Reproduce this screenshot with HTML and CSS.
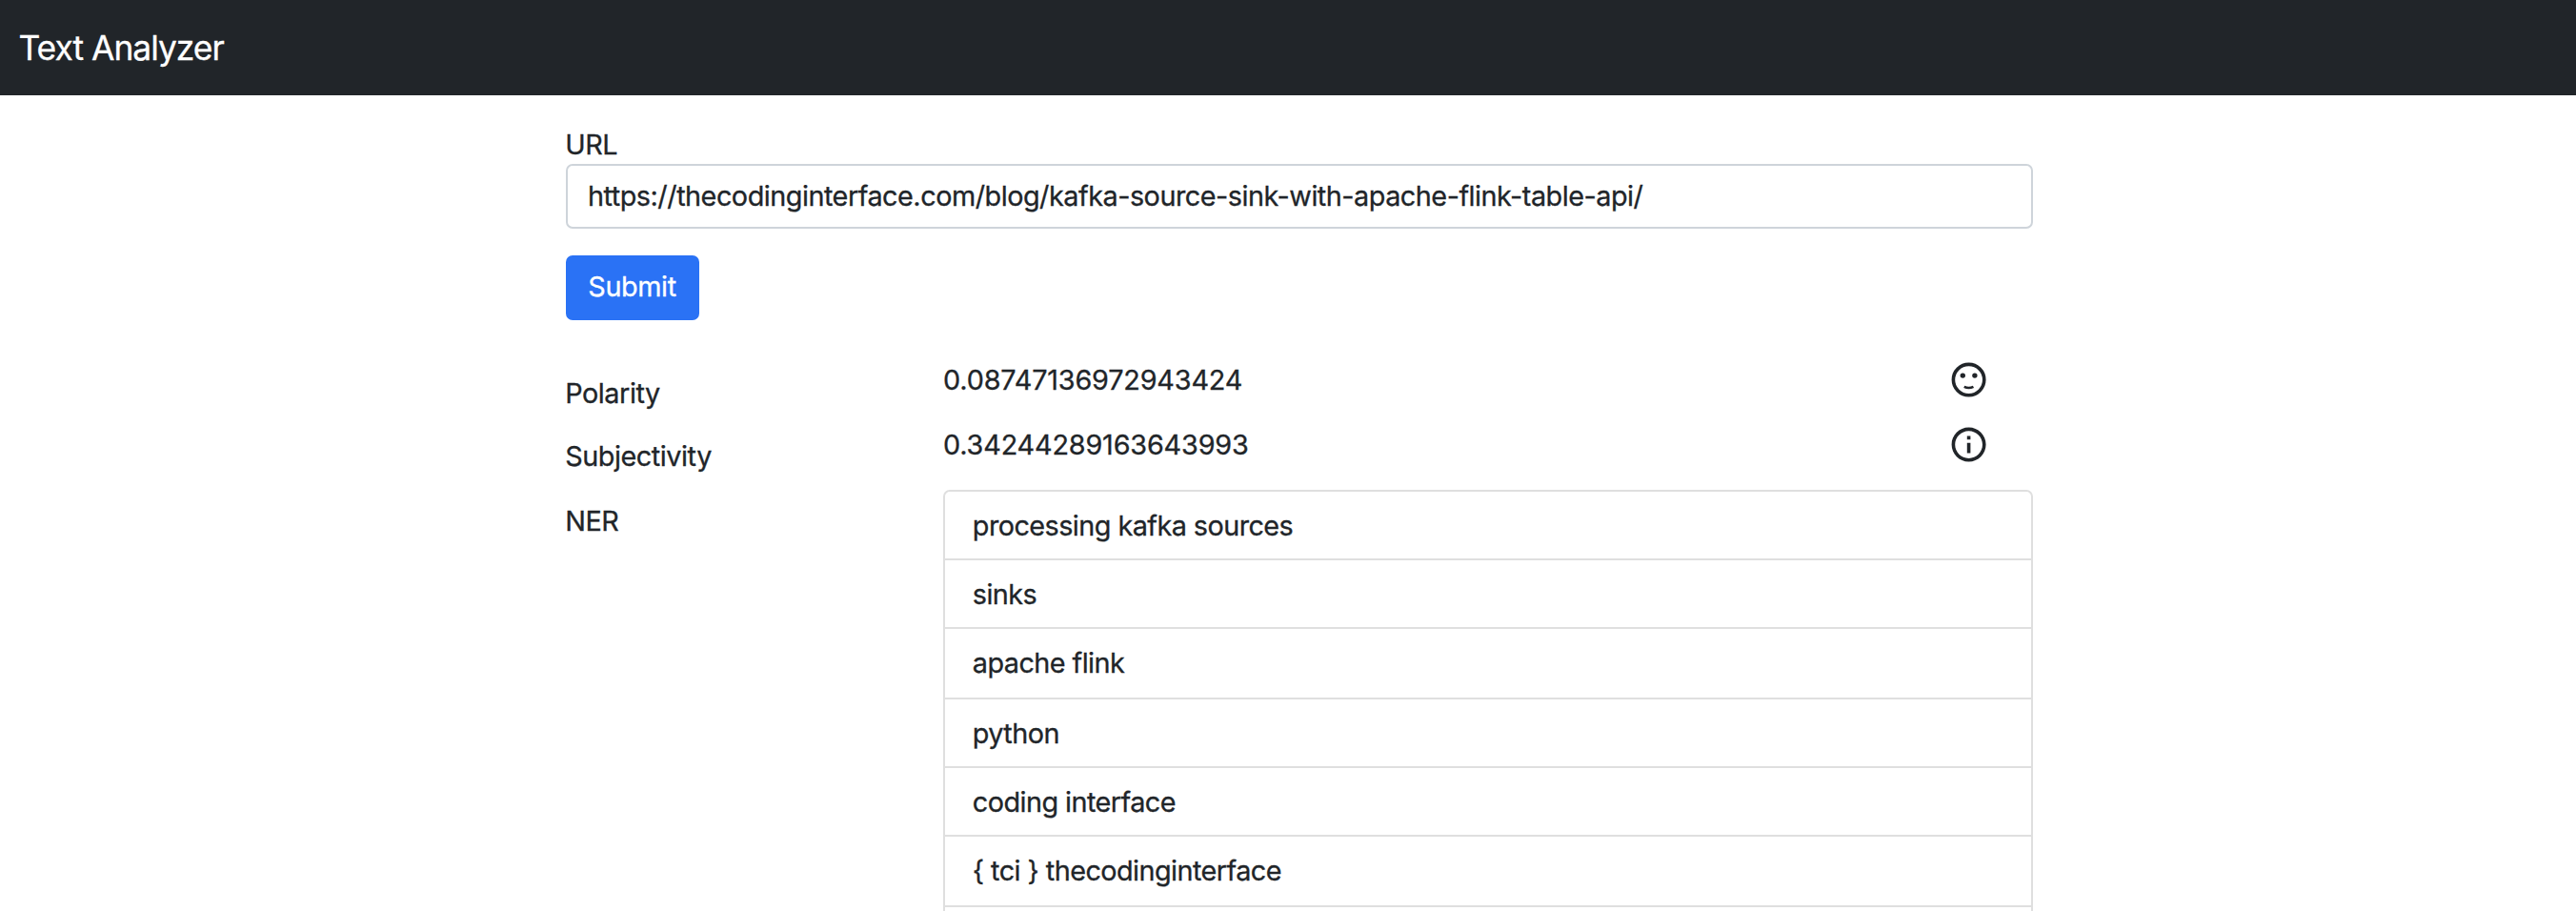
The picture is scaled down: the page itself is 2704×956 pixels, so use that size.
FILE: index.html
```html
<!DOCTYPE html>
<html lang="en">
<head>
<meta charset="utf-8">
<title>Text Analyzer</title>
<link rel="stylesheet" href="styles.css">
</head>
<body>
<nav class="navbar"><span class="brand">Text Analyzer</span></nav>
<main class="container">
  <form class="form">
    <label class="label" for="url">URL</label>
    <input class="input" id="url" type="text" value="https://thecodinginterface.com/blog/kafka-source-sink-with-apache-flink-table-api/">
    <button class="submit" type="button">Submit</button>
  </form>
  <section class="results">
    <div class="names">
      <div class="name">Polarity</div>
      <div class="name name-subjectivity">Subjectivity</div>
      <div class="name">NER</div>
    </div>
    <div class="values">
      <div class="score">
        <span class="number">0.08747136972943424</span>
        <svg class="icon" viewBox="0 0 24 24"><circle cx="12" cy="12" r="9" fill="none" stroke="currentColor" stroke-width="2"/><circle cx="8.5" cy="9.5" r="1.5"/><circle cx="15.5" cy="9.5" r="1.5"/><path d="M9.3 16Q12 17.400 14.700 16" fill="none" stroke="currentColor" stroke-width="1.4"/></svg>
      </div>
      <div class="score">
        <span class="number">0.34244289163643993</span>
        <svg class="icon" viewBox="0 0 24 24"><path d="M11 7h2v2h-2zm0 4h2v6h-2zm1-9C6.480 2 2 6.480 2 12s4.480 10 10 10 10-4.480 10-10S17.520 2 12 2zm0 18c-4.410 0-8-3.590-8-8s3.590-8 8-8 8 3.590 8 8-3.590 8-8 8z"/></svg>
      </div>
      <ul class="entities">
        <li class="entity">processing kafka sources</li>
        <li class="entity">sinks</li>
        <li class="entity">apache flink</li>
        <li class="entity">python</li>
        <li class="entity">coding interface</li>
        <li class="entity">{ tci } thecodinginterface</li>
        <li class="entity"></li>
      </ul>
    </div>
  </section>
</main>
</body>
</html>
```
FILE: styles.css
```css
* { box-sizing: border-box; }
body {
  margin: 0;
  background: #fff;
  color: #212529;
  font: 28.8px/43.2px Inter, "Liberation Sans", sans-serif;
  letter-spacing: -0.45px;
  -webkit-text-stroke: 0.3px currentColor;
}
.navbar {
  display: flex;
  align-items: center;
  height: 100px;
  padding: 2px 19.5px 0;
  background: #212529;
  color: #fff;
}
.brand { font-size: 35.4px; line-height: 54px; letter-spacing: -1px; }
.container {
  width: 1540px;
  height: 856px;
  margin-left: 594px;
  padding-top: 30px;
  overflow: hidden;
}
.form { display: flex; flex-direction: column; align-items: flex-start; }
.label { height: 42px; margin-left: -0.8px; }
.input {
  width: 100%;
  height: 68px;
  padding: 0 21px 2px;
  border: 2px solid #ced4da;
  border-radius: 7px;
  background: #fff;
  color: inherit;
  font: inherit;
  letter-spacing: -0.49px;
}
.submit {
  width: 140px;
  height: 68px;
  margin-top: 28px;
  padding: 0 1px 2px 0;
  border: 0;
  border-radius: 7px;
  background: #2a72f5;
  color: #fff;
  font: inherit;
  letter-spacing: -0.4px;
}
.results {
  display: grid;
  grid-template-columns: 396px 1fr;
  padding-top: 41px;
}
.names { padding-top: 14px; margin-left: -0.8px; }
.name { height: 66px; }
.name-subjectivity { height: 68px; }
.score {
  display: flex;
  justify-content: space-between;
  height: 68px;
  padding-right: 45.4px;
  letter-spacing: -0.18px;
}
.icon { width: 43.2px; height: 43.2px; margin-top: -0.2px; fill: currentColor; }
.entities {
  list-style: none;
  margin: 1px 0 0;
  padding: 0;
  border: 2px solid #dfdfdf;
  border-radius: 7px;
  letter-spacing: -0.55px;
}
.entity {
  height: 72px;
  padding: 14px 28.8px 0;
  border-bottom: 2px solid #dfdfdf;
}
.entity:nth-child(3n) { height: 74px; }
```
